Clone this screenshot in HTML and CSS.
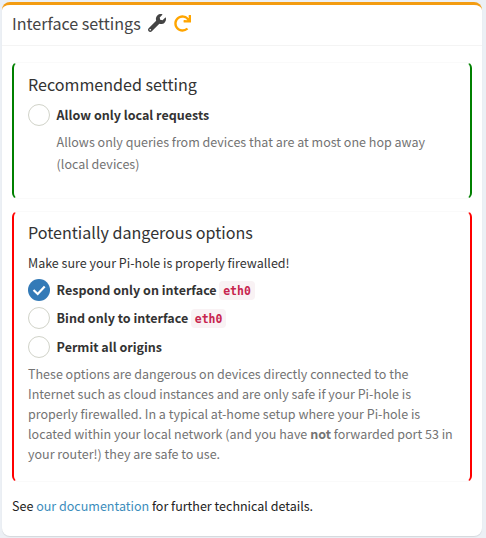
FILE: index.html
```html
<!DOCTYPE html>
<html lang="en">
<head>
<meta charset="utf-8">
<title>Interface settings</title>
<link rel="stylesheet" href="styles.css">
</head>
<body>
<section class="box">
  <header class="box-header">
    <h1>Interface settings</h1>
    <svg class="wrench" viewBox="0 0 512 512"><path fill="currentColor" d="M507.700 109.100c-2.200-9-13.500-12.100-20.100-5.500l-74.400 74.400-67.900-11.300L334 98.900l74.400-74.400c6.600-6.600 3.400-17.900-5.700-20.200-47.400-11.700-99.600.9-136.600 37.900-39.600 39.600-50.500 97.100-34.100 147.200L18.700 402.800c-25 25-25 65.500 0 90.500s65.500 25 90.500 0l213.200-213.200c50.100 16.700 107.500 5.700 147.400-34.200 37.100-37.100 49.700-89.300 37.900-136.800zM64 472c-13.200 0-24-10.800-24-24 0-13.300 10.700-24 24-24s24 10.700 24 24c0 13.200-10.700 24-24 24z"/></svg>
    <svg class="redo" viewBox="0 0 512 512"><path fill="currentColor" d="M500.330 0h-47.410a12 12 0 0 0-12 12.570l4 82.760A247.420 247.420 0 0 0 256 8C119.340 8 7.900 119.530 8 256.190 8.100 393.070 119.100 504 256 504a247.100 247.100 0 0 0 166.180-63.910 12 12 0 0 0 .48-17.430l-34-34a12 12 0 0 0-16.380-.55A176 176 0 1 1 402.100 157.800l-101.530-4.870a12 12 0 0 0-12.570 12v47.410a12 12 0 0 0 12 12h200.330a12 12 0 0 0 12-12V12a12 12 0 0 0-12-12z"/></svg>
  </header>
  <div class="box-body">
    <div class="panel safe">
      <h2>Recommended setting</h2>
      <label class="option"><span class="radio"></span><b>Allow only local requests</b></label>
      <p class="help indented">Allows only queries from devices that are at most one hop away<br>(local devices)</p>
    </div>
    <div class="panel danger">
      <h2>Potentially dangerous options</h2>
      <p class="warning">Make sure your Pi-hole is properly firewalled!</p>
      <label class="option"><span class="radio checked"><svg viewBox="0 0 22 22"><path d="M5.500 11l4.200 4 7-7.500" fill="none" stroke="#fff" stroke-width="2.200"/></svg></span><b>Respond only on interface</b><code>eth0</code></label>
      <label class="option"><span class="radio"></span><b>Bind only to interface</b><code>eth0</code></label>
      <label class="option last"><span class="radio"></span><b>Permit all origins</b></label>
      <p class="help">These options are dangerous on devices directly connected to the<br>Internet such as cloud instances and are only safe if your Pi-hole is<br>properly firewalled. In a typical at-home setup where your Pi-hole is<br>located within your local network (and you have <b>not</b> forwarded port 53 in<br>your router!) they are safe to use.</p>
    </div>
    <p class="docs">See <a>our documentation</a> for further technical details.</p>
  </div>
</section>
</body>
</html>
```
FILE: styles.css
```css
* { box-sizing: border-box; }
body {
  margin: 0;
  padding: 2px 4px 2px 2px;
  height: 538px;
  overflow: hidden;
  background: #ecf0f5;
  color: #333;
  font: 12.530px/20px "Noto Sans CJK SC", "Open Sans", sans-serif;
  white-space: nowrap;
}
h1, h2, p { margin: 0; font-weight: 400; }
.box {
  height: 534px;
  background: #fff;
  border-top: 3px solid #f39c12;
  border-radius: 8px;
  box-shadow: 0 1px 1px rgba(0, 0, 0, .1);
}
.box-header {
  display: flex;
  height: 41px;
  padding: 0 10px 4px;
  align-items: center;
  border-bottom: 1px solid #f4f4f4;
  color: #444;
}
h1 { width: 136px; font-size: 16.100px; line-height: 20px; }
.wrench { width: 18px; height: 18px; color: #444; }
.redo { width: 17px; height: 17px; margin-left: 8px; color: #ffa500; }
.box-body { padding: 16px 10px 0; }
.panel {
  padding: 10px 14px 0;
  border: 1px solid #fafafa;
  border-width: 1px 2px;
  border-radius: 6px;
}
.safe { height: 137px; border-left-color: green; border-right-color: green; }
.danger { height: 271px; margin-top: 12px; padding-top: 9px; border-left-color: red; border-right-color: red; }
h2 { font-size: 16.100px; line-height: 22px; }
.option { display: flex; height: 28px; align-items: center; }
.safe .option { margin-top: 6px; }
.radio {
  width: 22px;
  height: 22px;
  margin-right: 6.600px;
  border: 1px solid #d1d3c9;
  border-radius: 50%;
}
.checked { border: 0; background: #337ab7; }
.checked svg { display: block; }
.last { margin-top: 1px; }
b { font-weight: 700; }
code {
  height: 19px;
  margin-left: 2.500px;
  padding: 0 4px;
  border-radius: 4px;
  background: #f9f2f4;
  color: #c7254e;
  font: 700 11.500px/21px "DejaVu Sans Mono", monospace;
}
.help { color: #737373; }
.indented { padding-left: 28.600px; margin-top: 2px; line-height: 22px; }
.warning { margin-top: 10px; margin-bottom: 3px; }
.danger .help { margin-top: 3px; }
.docs { margin-top: 14px; color: #222; }
a { color: #3c8dbc; }
```
